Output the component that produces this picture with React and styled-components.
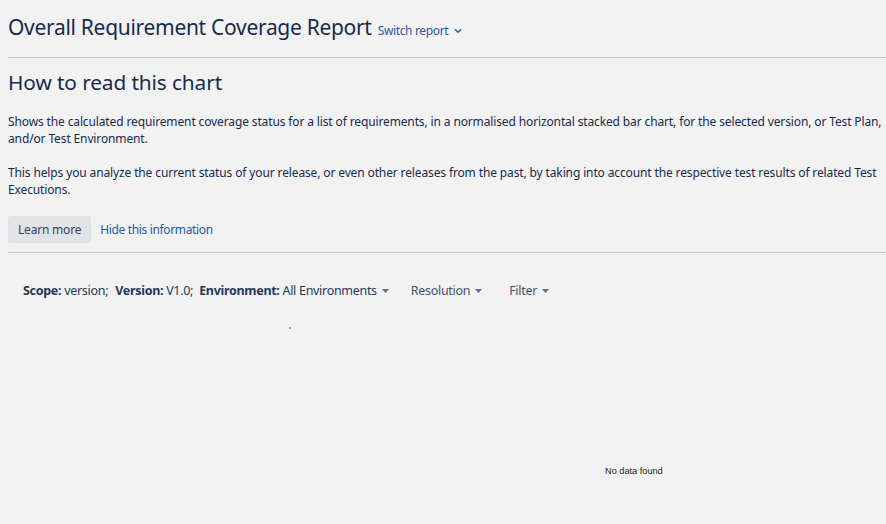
import React from 'react';
import styled, { createGlobalStyle } from 'styled-components';

const GlobalStyle = createGlobalStyle`
  html, body {
    margin: 0;
    padding: 0;
    background: #f2f2f2;
  }
  body {
    font-family: "Noto Sans", "Open Sans", sans-serif;
    color: #172b4d;
  }
`;

const Page = styled.div`
  width: 886px;
  height: 524px;
  overflow: hidden;
  padding: 0 0 0 8px;
  box-sizing: border-box;
  display: flex;
  flex-direction: column;
`;

const Header = styled.div`
  display: flex;
  align-items: baseline;
  gap: 6px;
  padding-top: 13px;
  height: 57px;
  box-sizing: border-box;
`;

const Title = styled.h1`
  margin: 0;
  font-size: 21px;
  font-weight: 400;
  letter-spacing: -0.3px;
  color: #172b4d;
`;

const LinkButton = styled.a`
  color: #2a5aa6;
  font-size: 12px;
  letter-spacing: -0.35px;
  cursor: pointer;
  display: inline-flex;
  align-items: center;
  gap: 6px;
`;

const Rule = styled.hr`
  margin: 0;
  border: 0;
  border-top: 1px solid #c8c9cc;
  width: 100%;
`;

const Section = styled.div`
  padding-top: 10px;
`;

const Heading = styled.h2`
  margin: 0 0 17px;
  font-size: 20.8px;
  font-weight: 400;
  letter-spacing: -0.1px;
  color: #172b4d;
`;

const Para = styled.p`
  margin: 0 0 ${p => (p.$last ? 0 : 17)}px;
  font-size: 12px;
  line-height: 17px;
  letter-spacing: -0.13px;
  color: #172b4d;
  white-space: nowrap;
`;

const Actions = styled.div`
  display: flex;
  align-items: center;
  gap: 9px;
  margin-top: 18px;
  padding-bottom: 9px;
`;

const Button = styled.button`
  border: 0;
  border-radius: 3px;
  background: #e2e3e6;
  color: #3a4452;
  font-family: inherit;
  font-size: 12px;
  letter-spacing: -0.2px;
  height: 27px;
  padding: 0 10px;
`;

const Toolbar = styled.div`
  display: flex;
  align-items: center;
  padding: 29px 0 0 15px;
  font-size: 12.5px;
  letter-spacing: -0.3px;
  color: #253858;
`;

const Crumb = styled.span`
  margin-right: ${p => p.$gap || 6}px;
  b { font-weight: 700; }
`;

const Dropdown = styled.span`
  display: inline-flex;
  align-items: center;
  gap: 5px;
  margin-right: ${p => p.$gap || 0}px;
  color: ${p => (p.$muted ? '#42526e' : '#253858')};
`;

const Caret = () => (
  <svg width="7" height="4" viewBox="0 0 7 4"><path d="M0 0h7L3.5 4z" fill="#5e6c84" /></svg>
);

const Chevron = () => (
  <svg width="8" height="6" viewBox="0 0 8 6"><path d="M1 1.2l3 3 3-3" stroke="#2a5aa6" strokeWidth="1.6" fill="none" /></svg>
);

const Chart = styled.div`
  position: relative;
  flex: 1;
`;

const Dot = styled.span`
  position: absolute;
  left: 281px;
  top: 28px;
  width: 2px;
  height: 2px;
  border-radius: 50%;
  background: #d0583a;
`;

const Empty = styled.div`
  position: absolute;
  left: 597px;
  top: 167px;
  font-family: "Liberation Sans", Arial, sans-serif;
  font-size: 9.2px;
  color: #222;
`;

export default function App() {
  return (
    <>
      <GlobalStyle />
      <Page>
        <Header>
          <Title>Overall Requirement Coverage Report</Title>
          <LinkButton>Switch report <Chevron /></LinkButton>
        </Header>
        <Rule />
        <Section>
          <Heading>How to read this chart</Heading>
          <Para>
            Shows the calculated requirement coverage status for a list of requirements, in a normalised horizontal stacked bar chart, for the selected version, or Test Plan,<br />
            and/or Test Environment.
          </Para>
          <Para $last>
            This helps you analyze the current status of your release, or even other releases from the past, by taking into account the respective test results of related Test<br />
            Executions.
          </Para>
          <Actions>
            <Button>Learn more</Button>
            <LinkButton>Hide this information</LinkButton>
          </Actions>
        </Section>
        <Rule />
        <Toolbar>
          <Crumb $gap={7}><b>Scope:</b> version;</Crumb>
          <Crumb><b>Version:</b> V1.0;</Crumb>
          <Dropdown $gap={22}><span><b>Environment:</b> All Environments</span><Caret /></Dropdown>
          <Dropdown $gap={27} $muted>Resolution <Caret /></Dropdown>
          <Dropdown $muted>Filter <Caret /></Dropdown>
        </Toolbar>
        <Chart>
          <Dot />
          <Empty>No data found</Empty>
        </Chart>
      </Page>
    </>
  );
}
